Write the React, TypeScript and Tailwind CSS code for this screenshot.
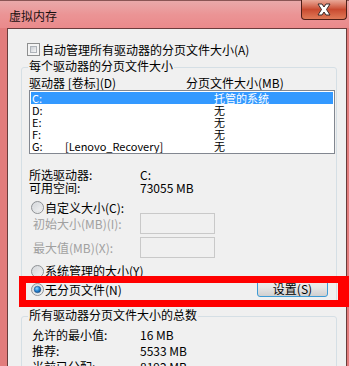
import React from "react";

function Radio({ checked }: { checked?: boolean }) {
  return (
    <svg width="13" height="13" viewBox="0 0 13 13" className="shrink-0">
      <defs>
        <linearGradient id="rgOuter" x1="0" y1="0" x2="1" y2="1">
          <stop offset="0" stopColor="#cfd2d6" />
          <stop offset="1" stopColor="#f8f8f8" />
        </linearGradient>
        <radialGradient id="rgDot" cx="0.4" cy="0.35" r="0.7">
          <stop offset="0" stopColor="#9ad8ff" />
          <stop offset="0.5" stopColor="#2a8ad6" />
          <stop offset="1" stopColor="#0d4a8a" />
        </radialGradient>
      </defs>
      <circle cx="6.5" cy="6.5" r="6" fill="url(#rgOuter)" stroke="#8f9295" strokeWidth="1" />
      <circle cx="6.5" cy="6.5" r="4.3" fill="none" stroke="#e0e2e4" strokeWidth="0.8" />
      {checked && <circle cx="6.5" cy="6.5" r="3.3" fill="url(#rgDot)" stroke="#1b4f85" strokeWidth="0.5" />}
    </svg>
  );
}

function Checkbox() {
  return (
    <div className="w-[13px] h-[13px] shrink-0 border border-[#8e8f8f] bg-[#f4f4f4] p-[2px]">
      <div className="w-full h-full border border-[#aeb3b9] bg-gradient-to-br from-[#cbcfd5] to-[#f6f6f6]" />
    </div>
  );
}

const rows = [
  { d: "C:", l: "", s: "托管的系统", sel: true },
  { d: "D:", l: "", s: "无" },
  { d: "E:", l: "", s: "无" },
  { d: "F:", l: "", s: "无" },
  { d: "G:", l: "[Lenovo_Recovery]", s: "无" },
];

export default function App() {
  return (
    <div className="relative w-[349px] h-[366px] overflow-hidden bg-[#e27c7c] text-[12px] leading-[12px] text-black font-[family-name:'Noto_Sans_CJK_SC',sans-serif]">
      {/* title bar */}
      <div className="flex items-start h-[28px] bg-gradient-to-b from-[#e9a9aa] via-[#eb9495] to-[#ea8a8b] border-t border-[#8a5555]">
        <div className="pl-[9px] pt-[9px] text-[#1a1010]">虚拟内存</div>
        <div className="ml-auto mr-[2px] -mt-px w-[46px] h-[20px] rounded-b-[4px] border border-t-0 border-[#4e1f18] bg-gradient-to-b from-[#e9a898] via-[#c94a30] to-[#e07a58] flex items-center justify-center">
          <svg width="16" height="13" viewBox="0 0 16 13">
            <path d="M2 1 H6 L8 4 L10 1 H14 L10.5 6.5 L14 12 H10 L8 9 L6 12 H2 L5.5 6.5 Z" fill="#ffffff" stroke="#3a2a2a" strokeWidth="1" strokeLinejoin="round" />
          </svg>
        </div>
      </div>

      {/* client panel */}
      <div className="ml-[7px] w-[340px] h-[338px] border-t border-l border-r border-[#6a3c3c] bg-[#f0f0f0]">
        <div className="flex items-center gap-[2px] pl-[19px] pt-[14px]">
          <Checkbox />
          <span>自动管理所有驱动器的分页文件大小(A)</span>
        </div>

        {/* group 1 */}
        <div className="mt-[11px] ml-[13px] w-[316px] h-[237px] border border-[#d5dfe5] rounded-[3px]">
          <div className="-mt-[8px] ml-[6px] w-fit px-px bg-[#f0f0f0]">每个驱动器的分页文件大小</div>
          <div className="mt-[5px] flex pl-[7px]">
            <span className="w-[157px]">驱动器 [卷标](D)</span>
            <span>分页文件大小(MB)</span>
          </div>
          <div className="mt-px ml-[7px] w-[306px] h-[64px] border border-[#828790] bg-white p-px overflow-hidden text-[11px] leading-[12px]">
            {rows.map((r) => (
              <div
                key={r.d}
                className={
                  r.sel
                    ? "flex h-[12px] bg-[#3399ff] text-white"
                    : "flex h-[12px] text-black"
                }
              >
                <span className="w-[34px] pl-px">{r.d}</span>
                <span className="w-[149px]">{r.l}</span>
                <span>{r.s}</span>
              </div>
            ))}
          </div>

          <div className="mt-[15px] flex pl-[7px]">
            <span className="w-[111px]">所选驱动器:</span>
            <span>C:</span>
          </div>
          <div className="mt-px flex pl-[7px]">
            <span className="w-[111px]">可用空间:</span>
            <span>73055 MB</span>
          </div>

          <div className="mt-[8px] h-[11px] flex items-center gap-px pl-[9px]">
            <Radio />
            <span>自定义大小(C):</span>
          </div>
          <div className="flex items-center h-[21px] pl-[11px] text-[#a0a0a0]">
            <span className="w-[107px]">初始大小(MB)(I):</span>
            <div className="w-[75px] h-[21px] border border-[#c9c9c9] bg-[#f0f0f0]" />
          </div>
          <div className="mt-[3px] flex items-center h-[21px] pl-[11px] text-[#a0a0a0]">
            <span className="w-[107px]">最大值(MB)(X):</span>
            <div className="w-[75px] h-[21px] border border-[#c9c9c9] bg-[#f0f0f0]" />
          </div>

          <div className="mt-[7px] h-[12px] flex items-center gap-px pl-[9px]">
            <Radio />
            <span>系统管理的大小(Y)</span>
          </div>
          <div className="mt-px h-[19px] flex items-start pl-[9px]">
            <div className="mt-[5px] flex items-center gap-px">
              <Radio checked />
              <span>无分页文件(N)</span>
            </div>
            <div className="ml-auto mr-[8px] w-[71px] h-[19px] rounded-[3px] border border-[#3c9bd6] bg-gradient-to-b from-[#f2f2f2] via-[#e6e6e6] to-[#d0d0d0] flex items-center justify-center pt-[2px]">
              设置(S)
            </div>
          </div>
        </div>

        {/* group 2 */}
        <div className="mt-[12px] ml-[13px] w-[316px] h-[100px] border border-[#d5dfe5] rounded-[3px]">
          <div className="-mt-[8px] ml-[6px] w-fit px-px bg-[#f0f0f0]">所有驱动器分页文件大小的总数</div>
          <div className="mt-[8px] flex pl-[10px]">
            <span className="w-[108px]">允许的最小值:</span>
            <span>16 MB</span>
          </div>
          <div className="mt-[4px] flex pl-[10px]">
            <span className="w-[108px]">推荐:</span>
            <span>5533 MB</span>
          </div>
          <div className="mt-[4px] flex pl-[10px]">
            <span className="w-[108px]">当前已分配:</span>
            <span>8192 MB</span>
          </div>
        </div>
      </div>

      {/* red highlight */}
      <div className="absolute left-[19px] top-[276px] w-[330px] h-[31px] border-[7px] border-r-[11px] border-[#ff0000]" />
    </div>
  );
}
